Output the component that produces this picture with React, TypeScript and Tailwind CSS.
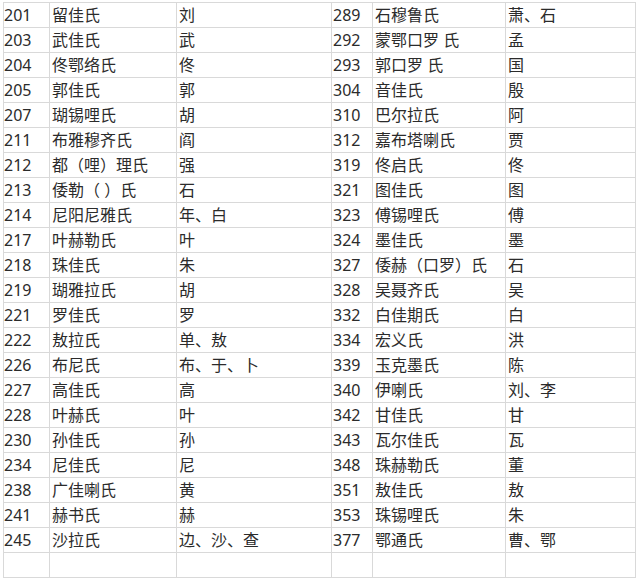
const rows: [string, string, string, string, string, string][] = [
  ["201", "留佳氏", "刘", "289", "石穆鲁氏", "萧、石"],
  ["203", "武佳氏", "武", "292", "蒙鄂口罗 氏", "孟"],
  ["204", "佟鄂络氏", "佟", "293", "郭口罗 氏", "国"],
  ["205", "郭佳氏", "郭", "304", "音佳氏", "殷"],
  ["207", "瑚锡哩氏", "胡", "310", "巴尔拉氏", "阿"],
  ["211", "布雅穆齐氏", "阎", "312", "嘉布塔喇氏", "贾"],
  ["212", "都（哩）理氏", "强", "319", "佟启氏", "佟"],
  ["213", "倭勒（ ）氏", "石", "321", "图佳氏", "图"],
  ["214", "尼阳尼雅氏", "年、白", "323", "傅锡哩氏", "傅"],
  ["217", "叶赫勒氏", "叶", "324", "墨佳氏", "墨"],
  ["218", "珠佳氏", "朱", "327", "倭赫（口罗）氏", "石"],
  ["219", "瑚雅拉氏", "胡", "328", "吴聂齐氏", "吴"],
  ["221", "罗佳氏", "罗", "332", "白佳期氏", "白"],
  ["222", "敖拉氏", "单、敖", "334", "宏义氏", "洪"],
  ["226", "布尼氏", "布、于、卜", "339", "玉克墨氏", "陈"],
  ["227", "高佳氏", "高", "340", "伊喇氏", "刘、李"],
  ["228", "叶赫氏", "叶", "342", "甘佳氏", "甘"],
  ["230", "孙佳氏", "孙", "343", "瓦尔佳氏", "瓦"],
  ["234", "尼佳氏", "尼", "348", "珠赫勒氏", "董"],
  ["238", "广佳喇氏", "黄", "351", "敖佳氏", "敖"],
  ["241", "赫书氏", "赫", "353", "珠锡哩氏", "朱"],
  ["245", "沙拉氏", "边、沙、查", "377", "鄂通氏", "曹、鄂"],
  ["", "", "", "", "", ""],
];

const pads = ["pl-0", "pl-[2px]", "pl-[2px]", "pl-[1px]", "pl-[2px]", "pl-[2px]"];

export default function App() {
  return (
    <div className="h-[580px] w-[640px] overflow-hidden bg-white">
      <div
        className="ml-[3px] mt-[2px] grid w-max grid-cols-[46px_127px_155px_41px_133px_130px] border-l border-t border-[#d9d9d9] text-[16px] text-[#2b2b2b]"
        style={{ fontFamily: '"Noto Sans", "Noto Sans CJK SC", sans-serif' }}
      >
        {rows.map((row, r) =>
          row.map((cell, i) => (
            <div
              key={`${r}-${i}`}
              className={`flex h-[25px] items-center overflow-hidden whitespace-pre border-b border-r border-[#d9d9d9] leading-none ${pads[i]}`}
            >
              {cell}
            </div>
          ))
        )}
      </div>
    </div>
  );
}
